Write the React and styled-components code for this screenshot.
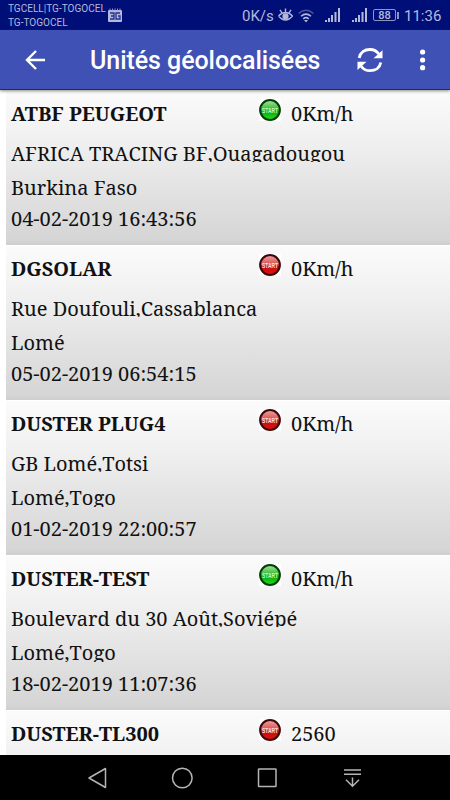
import React from "react";
import styled, { createGlobalStyle } from "styled-components";

const GlobalStyle = createGlobalStyle`
  * { box-sizing: border-box; }
  body { margin: 0; background: #fff; overflow: hidden; }
  svg { display: block; flex: none; }
`;

const Screen = styled.div`
  width: 450px;
  height: 800px;
  display: flex;
  flex-direction: column;
  overflow: hidden;
  background: #fff;
  font-family: Roboto, sans-serif;
`;

const StatusBar = styled.header`
  height: 30px;
  flex: none;
  display: flex;
  justify-content: space-between;
  background: #000f77;
  color: #b4b9dc;
`;

const Carriers = styled.div`
  display: flex;
  padding-left: 8px;
  gap: 2px;
`;

const CarrierNames = styled.div`
  width: 98px;
  padding-top: 2px;
  font-size: 10px;
  line-height: 14px;
  letter-spacing: 0.03px;
  white-space: nowrap;
`;

const CalendarIcon = styled.svg`
  margin-top: 8px;
`;

const Indicators = styled.div`
  display: flex;
  align-items: center;
  padding-right: 10px;
`;

const StatusText = styled.span`
  font-size: 15px;
  line-height: 30px;
  white-space: nowrap;
  padding-top: 1px;
  width: ${(p) => p.$width}px;
`;

const AppBar = styled.nav`
  height: 60px;
  flex: none;
  display: flex;
  align-items: center;
  background: #3f51b5;
  border-bottom: 1px solid #0a2ba8;
  box-shadow: 0 1px 3px rgba(60, 60, 30, 0.6);
  color: #fff;
  z-index: 1;
  padding-left: 22px;
`;

const Title = styled.h1`
  margin: 3px 0 0 42px;
  width: 266px;
  font-size: 25px;
  line-height: 30px;
  font-weight: 500;
  letter-spacing: -0.06px;
  white-space: nowrap;
`;

const IconButton = styled.button`
  display: flex;
  padding: 0;
  border: 0;
  background: none;
  color: inherit;
  margin-left: ${(p) => p.$gap || 0}px;
`;

const List = styled.main`
  flex: 1;
  min-height: 0;
  overflow: hidden;
  padding-left: 6px;
  font-family: "Noto Serif", "Droid Serif", "DejaVu Serif", serif;
  font-size: 20px;
  font-kerning: none;
  color: #111;
`;

const UnitRow = styled.article`
  height: 155px;
  padding-left: 5px;
  border-top: 1px solid #fff;
  background: linear-gradient(#fbfbfb, #f0f0f0 32%, #d5d5d5 97%, #cecece);
`;

const UnitHead = styled.div`
  height: 50px;
  display: flex;
  padding-top: 8px;
`;

const UnitName = styled.h2`
  margin: 3px 0 0;
  width: 248px;
  font-size: inherit;
  line-height: 24px;
  font-kerning: normal;
  white-space: nowrap;
`;

const Speed = styled.span`
  margin: 3px 0 0 10px;
  line-height: 24px;
`;

const AddressLine = styled.div`
  height: 21px;
  margin-bottom: 13px;
  line-height: 26px;
  overflow: hidden;
  white-space: nowrap;
`;

const CityLine = styled(AddressLine)`
  height: 22px;
  margin-bottom: 9px;
`;

const Timestamp = styled.time`
  display: block;
  line-height: 26px;
  white-space: nowrap;
`;

const LampTile = styled.div`
  width: 22px;
  height: 22px;
  background: #fff;
`;

const LampLabel = styled.text`
  font: bold 7.5px "Liberation Sans", sans-serif;
  fill: ${(p) => (p.$on ? "#c4fbc0" : "#ffe0e0")};
`;

const NavBar = styled.footer`
  height: 45px;
  flex: none;
  display: flex;
  align-items: center;
  padding-left: 87px;
  background: #000;
`;

const units = [
  { name: "ATBF PEUGEOT", on: true, speed: "0Km/h", address: "AFRICA TRACING BF,Ouagadougou", city: "Burkina Faso", time: "04-02-2019 16:43:56" },
  { name: "DGSOLAR", on: false, speed: "0Km/h", address: "Rue Doufouli,Cassablanca", city: "Lomé", time: "05-02-2019 06:54:15" },
  { name: "DUSTER PLUG4", on: false, speed: "0Km/h", address: "GB Lomé,Totsi", city: "Lomé,Togo", time: "01-02-2019 22:00:57" },
  { name: "DUSTER-TEST", on: true, speed: "0Km/h", address: "Boulevard du 30 Août,Soviépé", city: "Lomé,Togo", time: "18-02-2019 11:07:36" },
  { name: "DUSTER-TL300", on: false, speed: "2560" },
];

function Lamp({ on }) {
  const id = on ? "lamp-on" : "lamp-off";
  return (
    <LampTile>
      <svg width="22" height="22" viewBox="0 0 22 22">
        <defs>
          <linearGradient id={id} x1="0" y1="0" x2="0" y2="1">
            <stop offset="0" stopColor={on ? "#a5e8a0" : "#f3a3a3"} />
            <stop offset=".48" stopColor={on ? "#35b632" : "#d65050"} />
            <stop offset=".55" stopColor={on ? "#0aa60a" : "#c51010"} />
            <stop offset="1" stopColor={on ? "#1fe01f" : "#e40d0d"} />
          </linearGradient>
        </defs>
        <circle cx="11" cy="11" r="9.9" fill={`url(#${id})`} stroke={on ? "#043d04" : "#3a0808"} strokeWidth="2" />
        <LampLabel x="3" y="14" textLength="16" lengthAdjust="spacingAndGlyphs" $on={on}>START</LampLabel>
      </svg>
    </LampTile>
  );
}

function Signal() {
  return (
    <svg width="16" height="16" viewBox="0 0 16 16" fill="#b4b9dc">
      <path d="M0 13h2v2H0zM3 11h2v4H3zM6 8h2v7H6zM9.5 5h2v10h-2zM13 1h2v14h-2z" />
    </svg>
  );
}

const Eye = styled.svg`margin: 0 5px 0 0;`;
const Wifi = styled.svg`margin: 1px 11px 0 0;`;
const SignalSlot = styled.span`width: ${(p) => p.$width}px;`;
const Battery = styled.span`
  width: 23px;
  height: 12px;
  border: 1px solid #8e95c6;
  border-radius: 2px;
  font-size: 11px;
  line-height: 11px;
  font-weight: 500;
  text-align: center;
`;
const BatteryTip = styled.span`
  width: 2px;
  height: 7px;
  margin: 0 5px 0 1px;
  background: #8e95c6;
`;
const NavIcon = styled.svg`
  margin-right: ${(p) => p.$after || 0}px;
  fill: none;
  stroke: #b5b5b5;
  stroke-width: 1.5;
`;

export default function App() {
  return (
    <Screen>
      <GlobalStyle />
      <StatusBar>
        <Carriers>
          <CarrierNames>TGCELL|TG-TOGOCEL<br />TG-TOGOCEL</CarrierNames>
          <CalendarIcon width="14" height="14" viewBox="0 0 14 14">
            <rect y="2" width="14" height="12" rx="1" fill="#b4b9dc" />
            <path d="M2 .5v2M4.5.5v2M7 .5v2M9.5.5v2M12 .5v2" stroke="#8e95c6" />
            <path d="M2 5h4v6H2M3 8h3M12 5H8v6h4V8h-2" fill="none" stroke="#25318a" strokeWidth="1.3" />
          </CalendarIcon>
        </Carriers>
        <Indicators>
          <StatusText $width={36}>0K/s</StatusText>
          <Eye width="15" height="14" viewBox="0 0 15 14" fill="none" stroke="#b4b9dc" strokeWidth="1.4">
            <path d="M.5 8Q7.5 1 14.5 8Q7.5 16 .5 8M7.5 4V.5M4 5 2 1.8M11 5l2-3.2" />
            <circle cx="7.5" cy="8.3" r="2.4" fill="#b4b9dc" />
          </Eye>
          <Wifi width="16" height="14" viewBox="0 0 16 14" fill="none" strokeWidth="1.5">
            <path d="M.6 4.5Q8-2 15.4 4.5" stroke="#4a54a0" />
            <path d="M3 7.3Q8 3 13 7.3M5.2 9.8Q8 7.5 10.8 9.8" stroke="#b4b9dc" />
            <path d="m6 11 2 2.5L10 11Z" fill="#b4b9dc" />
          </Wifi>
          <SignalSlot $width={27}><Signal /></SignalSlot>
          <SignalSlot $width={21}><Signal /></SignalSlot>
          <Battery>88</Battery>
          <BatteryTip />
          <StatusText $width={36}>11:36</StatusText>
        </Indicators>
      </StatusBar>
      <AppBar>
        <IconButton aria-label="Retour">
          <svg width="26" height="24" viewBox="0 0 26 24" fill="none" stroke="#fff" strokeWidth="2.4">
            <path d="M23 12H5M14 3l-9 9 9 9" />
          </svg>
        </IconButton>
        <Title>Unités géolocalisées</Title>
        <IconButton aria-label="Actualiser">
          <svg width="28" height="26" viewBox="0 0 28 26" fill="none" stroke="#fff" strokeWidth="2.8">
            <path d="M3.2 11C4.2 5.5 8.5 2.5 14 2.5c3.8 0 6.8 1.5 8.8 4.5M24.8 15.5c-1 5.2-5.3 8.2-10.8 8.2-3.8 0-6.8-1.5-8.8-4.5" />
            <path d="M26.5 3.3v8h-9zM1.5 23v-8.2h9z" fill="#fff" stroke="none" />
          </svg>
        </IconButton>
        <IconButton $gap={36} aria-label="Menu">
          <svg width="6" height="22" viewBox="0 0 6 22" fill="#fff">
            <circle cx="2.6" cy="3" r="2.6" /><circle cx="2.6" cy="11" r="2.6" /><circle cx="2.6" cy="18.7" r="2.6" />
          </svg>
        </IconButton>
      </AppBar>
      <List>
        {units.map((u) => (
          <UnitRow key={u.name}>
            <UnitHead>
              <UnitName>{u.name}</UnitName>
              <Lamp on={u.on} />
              <Speed>{u.speed}</Speed>
            </UnitHead>
            {u.address && (
              <>
                <AddressLine>{u.address}</AddressLine>
                <CityLine>{u.city}</CityLine>
                <Timestamp>{u.time}</Timestamp>
              </>
            )}
          </UnitRow>
        ))}
      </List>
      <NavBar>
        <NavIcon $after={64} width="20" height="22" viewBox="0 0 20 22"><path d="M18.5 1.5v19L2 11Z" strokeLinejoin="round" /></NavIcon>
        <NavIcon $after={64} width="22" height="22" viewBox="0 0 22 22"><circle cx="11.3" cy="11" r="9.8" /></NavIcon>
        <NavIcon $after={66} width="20" height="20" viewBox="0 0 20 20"><rect x="1.5" y="1" width="17.5" height="17.5" rx=".5" /></NavIcon>
        <NavIcon width="18" height="20" viewBox="0 0 18 20"><path d="M1 2h17M1 6.2h17M9.5 9.5v9M3 11.8l6.5 6.5 6.5-6.5" /></NavIcon>
      </NavBar>
    </Screen>
  );
}
